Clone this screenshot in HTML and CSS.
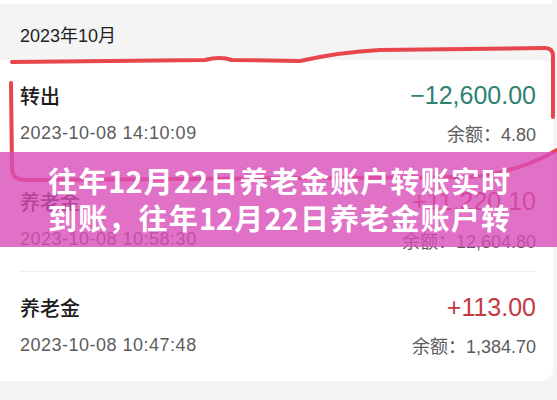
FILE: index.html
```html
<!DOCTYPE html>
<html lang="zh-CN">
<head>
    <meta charset="UTF-8">
    <meta name="viewport" content="width=device-width, initial-scale=1.0">
    <title>往年12月22日养老金账户转账实时到账</title>
    <link rel="stylesheet" href="styles.css">
</head>
<body>
    <div class="page">
        <div class="prev-card"></div>

        <div class="month">2023年10月</div>

        <div class="card">
            <div class="row">
                <div class="line-top">
                    <span class="name">转出</span>
                    <span class="amount out">−12,600.00</span>
                </div>
                <div class="line-bottom">
                    <span class="time">2023-10-08 14:10:09</span>
                    <span class="balance">余额：4.80</span>
                </div>
            </div>
            <div class="row">
                <div class="line-top">
                    <span class="name">养老金</span>
                    <span class="amount in">+11,220.10</span>
                </div>
                <div class="line-bottom">
                    <span class="time">2023-10-08 10:58:30</span>
                    <span class="balance">余额：12,604.80</span>
                </div>
            </div>
            <div class="row">
                <div class="line-top">
                    <span class="name">养老金</span>
                    <span class="amount in">+113.00</span>
                </div>
                <div class="line-bottom">
                    <span class="time">2023-10-08 10:47:48</span>
                    <span class="balance">余额：1,384.70</span>
                </div>
            </div>
        </div>

        <!-- hand drawn marker around the first record -->
        <svg class="marker" width="557" height="400" viewBox="0 0 557 400">
            <path d="M12 62 L205 60 Q220 56 232 60 L300 61 Q340 52 380 50 L545 48 Q553 48 553 56 L553 117" />
            <path d="M11 83 L12 168 Q12 180 26 180 L470 177 Q520 172 557 150" />
        </svg>

        <div class="banner">
            <h1 class="banner-title">往年12月22日养老金账户转账实时<br>到账，往年12月22日养老金账户转账实时到账全解析</h1>
        </div>
    </div>
</body>
</html>
```

FILE: styles.css
```css
* {
    margin: 0;
    padding: 0;
    box-sizing: border-box;
}

body {
    font-family: 'Liberation Sans', 'Noto Sans CJK SC', sans-serif;
    background: #f4f4f4;
    color: #1c1c1c;
    width: 557px;
    height: 400px;
    overflow: hidden;
}

.page {
    position: relative;
    height: 400px;
}

.prev-card {
    height: 4px;
    margin-right: 4px;
    background: #fff;
    border-radius: 0 0 12px 0;
}

.month {
    height: 56px;
    padding: 22px 0 0 20px;
    font-size: 18px;
    line-height: 20px;
    color: #1f1f1f;
}

.card {
    background: #fff;
    margin-right: 4px;
    border-radius: 0 12px 12px 0;
    padding-bottom: 4px;
}

.row {
    height: 105.5px;
    margin: 0 17px 0 20px;
    padding-top: 22px;
}

.row + .row {
    border-top: 1px solid #efefef;
}

.line-top,
.line-bottom {
    display: flex;
    justify-content: space-between;
    align-items: center;
}

.line-top {
    height: 26px;
}

.line-bottom {
    height: 20px;
    margin-top: 15px;
}

.name {
    font-size: 20px;
    font-weight: 500;
    color: #1c1c1c;
}

.amount {
    font-size: 25px;
}

.amount.out {
    color: #2d8270;
}

.amount.in {
    color: #c13a40;
}

.time,
.balance {
    font-size: 18px;
    color: #5c5c5c;
}

.time {
    letter-spacing: 0.5px;
}

/* marker strokes */
.marker {
    position: absolute;
    top: 0;
    left: 0;
    pointer-events: none;
}

.marker path {
    fill: none;
    stroke: #e8464d;
    stroke-width: 4;
    stroke-linecap: round;
    stroke-linejoin: round;
}

/* title banner */
.banner {
    position: absolute;
    top: 152px;
    left: 0;
    width: 557px;
    height: 95px;
    background: rgba(216, 78, 184, 0.8);
    padding: 10px 0 0 48px;
}

.banner-title {
    width: 462px;
    height: 74px;
    overflow: hidden;
    font-family: 'Noto Sans CJK SC', sans-serif;
    font-size: 29px;
    font-weight: 700;
    line-height: 37px;
    text-align: justify;
    text-align-last: justify;
    color: #fff;
}
```
